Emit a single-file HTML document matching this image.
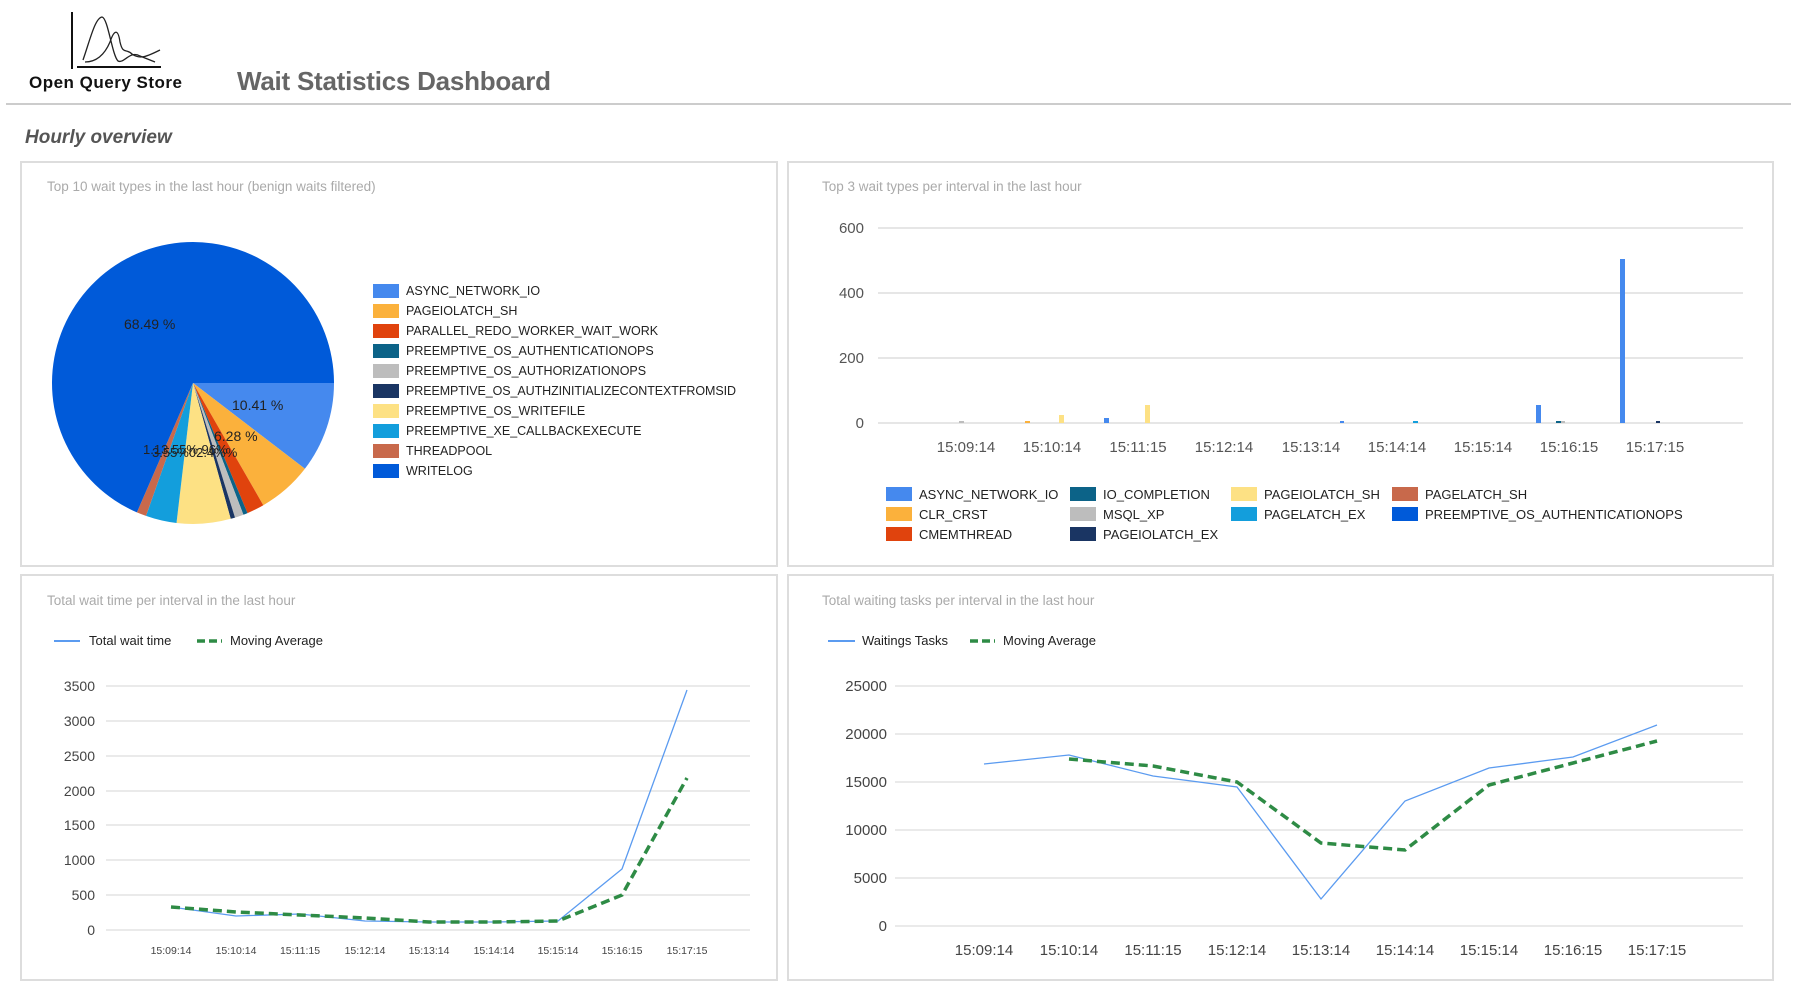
<!DOCTYPE html>
<html><head><meta charset="utf-8"><style>
html,body{margin:0;padding:0;background:#fff;width:1795px;height:1002px;overflow:hidden}
svg{display:block;font-family:"Liberation Sans",sans-serif}
</style></head><body>
<svg width="1795" height="1002" viewBox="0 0 1795 1002" xmlns="http://www.w3.org/2000/svg">
<line x1="72" y1="12" x2="72" y2="69" stroke="#111" stroke-width="2"/>
<line x1="77" y1="67" x2="161" y2="67" stroke="#111" stroke-width="2"/>
<path d="M83 60 C90 40 95 18 102 17 C108 18 112 55 118 61 C124 64 130 50 140 56 L155 62" fill="none" stroke="#222" stroke-width="1.3"/>
<path d="M85 62 C95 62 104 56 110 42 C114 30 118 28 120 42 C123 55 126 48 132 54 C140 60 148 56 160 50" fill="none" stroke="#222" stroke-width="1.3"/>
<text x="29" y="88" font-size="17" font-weight="bold" fill="#111" letter-spacing="0.5">Open Query Store</text>
<text x="237" y="90" font-size="26" font-weight="bold" fill="#666" textLength="314">Wait Statistics Dashboard</text>
<line x1="6" y1="104" x2="1791" y2="104" stroke="#bbb" stroke-width="1.5"/>
<text x="25" y="143" font-size="19" font-weight="bold" font-style="italic" fill="#555">Hourly overview</text>
<g fill="none" stroke="#ddd" stroke-width="2">
<rect x="21" y="162" width="756" height="404"/>
<rect x="788" y="162" width="985" height="404"/>
<rect x="21" y="575" width="756" height="405"/>
<rect x="788" y="575" width="985" height="405"/>
</g>
<g font-size="13.5" fill="#aaa">
<text x="47" y="191">Top 10 wait types in the last hour (benign waits filtered)</text>
<text x="822" y="191">Top 3 wait types per interval in the last hour</text>
<text x="47" y="605">Total wait time per interval in the last hour</text>
<text x="822" y="605">Total waiting tasks per interval in the last hour</text>
</g>
<path d="M193 383 L334 383 A141 141 0 0 1 304.9 468.8Z" fill="#4589ee"/>
<path d="M193 383 L304.9 468.8 A141 141 0 0 1 263.3 505.2Z" fill="#fbb13c"/>
<path d="M193 383 L263.3 505.2 A141 141 0 0 1 247.5 513.1Z" fill="#e0430d"/>
<path d="M193 383 L247.5 513.1 A141 141 0 0 1 243.4 514.7Z" fill="#0c6388"/>
<path d="M193 383 L243.4 514.7 A141 141 0 0 1 235 517.6Z" fill="#bdbdbd"/>
<path d="M193 383 L235 517.6 A141 141 0 0 1 230.7 518.8Z" fill="#1a3563"/>
<path d="M193 383 L230.7 518.8 A141 141 0 0 1 176.5 523Z" fill="#fde184"/>
<path d="M193 383 L176.5 523 A141 141 0 0 1 146 515.9Z" fill="#139edc"/>
<path d="M193 383 L146 515.9 A141 141 0 0 1 136.9 512.4Z" fill="#c8694b"/>
<path d="M193 383 L136.9 512.4 A141 141 0 1 1 334 383Z" fill="#005ad9"/>
<g font-size="14" fill="#222">
<text x="124" y="329">68.49 %</text>
<text x="232" y="410">10.41 %</text>
<text x="214" y="441">6.28 %</text>
<text x="143" y="454" font-size="13">1.13.55%.96%</text>
<text x="152" y="457" font-size="13">3.55%02.4%%</text>
</g>
<g font-size="12.5" fill="#222">
<rect x="373" y="284" width="26" height="14" fill="#4589ee"/><text x="406" y="295">ASYNC_NETWORK_IO</text>
<rect x="373" y="304" width="26" height="14" fill="#fbb13c"/><text x="406" y="315">PAGEIOLATCH_SH</text>
<rect x="373" y="324" width="26" height="14" fill="#e0430d"/><text x="406" y="335">PARALLEL_REDO_WORKER_WAIT_WORK</text>
<rect x="373" y="344" width="26" height="14" fill="#0c6388"/><text x="406" y="355">PREEMPTIVE_OS_AUTHENTICATIONOPS</text>
<rect x="373" y="364" width="26" height="14" fill="#bdbdbd"/><text x="406" y="375">PREEMPTIVE_OS_AUTHORIZATIONOPS</text>
<rect x="373" y="384" width="26" height="14" fill="#1a3563"/><text x="406" y="395" textLength="330">PREEMPTIVE_OS_AUTHZINITIALIZECONTEXTFROMSID</text>
<rect x="373" y="404" width="26" height="14" fill="#fde184"/><text x="406" y="415">PREEMPTIVE_OS_WRITEFILE</text>
<rect x="373" y="424" width="26" height="14" fill="#139edc"/><text x="406" y="435">PREEMPTIVE_XE_CALLBACKEXECUTE</text>
<rect x="373" y="444" width="26" height="14" fill="#c8694b"/><text x="406" y="455">THREADPOOL</text>
<rect x="373" y="464" width="26" height="14" fill="#005ad9"/><text x="406" y="475">WRITELOG</text>
</g>
<g stroke="#ddd" stroke-width="1.5">
<line x1="878" y1="228" x2="1743" y2="228"/><line x1="878" y1="293" x2="1743" y2="293"/>
<line x1="878" y1="358" x2="1743" y2="358"/><line x1="878" y1="423" x2="1743" y2="423"/>
</g>
<g font-size="15" fill="#555" text-anchor="end">
<text x="864" y="233">600</text><text x="864" y="298">400</text><text x="864" y="363">200</text><text x="864" y="428">0</text>
</g>
<g font-size="15" fill="#555" text-anchor="middle">
<text x="966" y="452">15:09:14</text><text x="1052" y="452">15:10:14</text><text x="1138" y="452">15:11:15</text>
<text x="1224" y="452">15:12:14</text><text x="1311" y="452">15:13:14</text><text x="1397" y="452">15:14:14</text>
<text x="1483" y="452">15:15:14</text><text x="1569" y="452">15:16:15</text><text x="1655" y="452">15:17:15</text>
</g>
<rect x="959" y="421" width="5" height="2" fill="#bdbdbd"/>
<rect x="1025" y="421" width="5" height="2" fill="#fbb13c"/>
<rect x="1059" y="415" width="5" height="8" fill="#fde184"/>
<rect x="1104" y="418" width="5" height="5" fill="#4589ee"/>
<rect x="1145" y="405" width="5" height="18" fill="#fde184"/>
<rect x="1340" y="421" width="4" height="2" fill="#4589ee"/>
<rect x="1413" y="421" width="5" height="2" fill="#139edc"/>
<rect x="1536" y="405" width="5" height="18" fill="#4589ee"/>
<rect x="1556" y="421" width="5" height="2" fill="#0c6388"/><rect x="1561" y="421" width="4" height="2" fill="#bdbdbd"/>
<rect x="1620" y="259" width="5" height="164" fill="#4589ee"/>
<rect x="1656" y="421" width="4" height="2" fill="#1a3563"/>
<g font-size="13" fill="#222">
<rect x="886" y="487" width="26" height="14" fill="#4589ee"/><text x="919" y="499">ASYNC_NETWORK_IO</text>
<rect x="886" y="507" width="26" height="14" fill="#fbb13c"/><text x="919" y="519">CLR_CRST</text>
<rect x="886" y="527" width="26" height="14" fill="#e0430d"/><text x="919" y="539">CMEMTHREAD</text>
<rect x="1070" y="487" width="26" height="14" fill="#0c6388"/><text x="1103" y="499">IO_COMPLETION</text>
<rect x="1070" y="507" width="26" height="14" fill="#bdbdbd"/><text x="1103" y="519">MSQL_XP</text>
<rect x="1070" y="527" width="26" height="14" fill="#1a3563"/><text x="1103" y="539">PAGEIOLATCH_EX</text>
<rect x="1231" y="487" width="26" height="14" fill="#fde184"/><text x="1264" y="499">PAGEIOLATCH_SH</text>
<rect x="1231" y="507" width="26" height="14" fill="#139edc"/><text x="1264" y="519">PAGELATCH_EX</text>
<rect x="1392" y="487" width="26" height="14" fill="#c8694b"/><text x="1425" y="499">PAGELATCH_SH</text>
<rect x="1392" y="507" width="26" height="14" fill="#005ad9"/><text x="1425" y="519">PREEMPTIVE_OS_AUTHENTICATIONOPS</text>
</g>
<g stroke="#ddd" stroke-width="1.2">
<line x1="106" y1="686" x2="750" y2="686"/><line x1="106" y1="721" x2="750" y2="721"/><line x1="106" y1="756" x2="750" y2="756"/>
<line x1="106" y1="791" x2="750" y2="791"/><line x1="106" y1="825" x2="750" y2="825"/><line x1="106" y1="860" x2="750" y2="860"/>
<line x1="106" y1="895" x2="750" y2="895"/><line x1="106" y1="930" x2="750" y2="930"/>
</g>
<g font-size="14" fill="#444" text-anchor="end">
<text x="95" y="691">3500</text><text x="95" y="726">3000</text><text x="95" y="761">2500</text><text x="95" y="796">2000</text>
<text x="95" y="830">1500</text><text x="95" y="865">1000</text><text x="95" y="900">500</text><text x="95" y="935">0</text>
</g>
<g font-size="10.5" fill="#444" text-anchor="middle">
<text x="171" y="954">15:09:14</text><text x="236" y="954">15:10:14</text><text x="300" y="954">15:11:15</text>
<text x="365" y="954">15:12:14</text><text x="429" y="954">15:13:14</text><text x="494" y="954">15:14:14</text>
<text x="558" y="954">15:15:14</text><text x="622" y="954">15:16:15</text><text x="687" y="954">15:17:15</text>
</g>
<polyline points="171,907 236,916 300,914 365,921 429,922 494,922 558,921 622,869 687,690" fill="none" stroke="#5b9bf0" stroke-width="1.3"/>
<polyline points="171,907 236,912 300,915 365,918 429,922 494,922 558,921 622,895 687,778" fill="none" stroke="#2e8b45" stroke-width="3.5" stroke-dasharray="9,5"/>
<line x1="54" y1="641" x2="80" y2="641" stroke="#5b9bf0" stroke-width="2"/>
<line x1="197" y1="641" x2="222" y2="641" stroke="#2e8b45" stroke-width="3.5" stroke-dasharray="8,4"/>
<g font-size="13" fill="#222"><text x="89" y="645">Total wait time</text><text x="230" y="645">Moving Average</text></g>
<g stroke="#ddd" stroke-width="1.2">
<line x1="895" y1="686" x2="1743" y2="686"/><line x1="895" y1="734" x2="1743" y2="734"/><line x1="895" y1="782" x2="1743" y2="782"/>
<line x1="895" y1="830" x2="1743" y2="830"/><line x1="895" y1="878" x2="1743" y2="878"/><line x1="895" y1="926" x2="1743" y2="926"/>
</g>
<g font-size="15" fill="#444" text-anchor="end">
<text x="887" y="691">25000</text><text x="887" y="739">20000</text><text x="887" y="787">15000</text>
<text x="887" y="835">10000</text><text x="887" y="883">5000</text><text x="887" y="931">0</text>
</g>
<g font-size="15" fill="#444" text-anchor="middle">
<text x="984" y="955">15:09:14</text><text x="1069" y="955">15:10:14</text><text x="1153" y="955">15:11:15</text>
<text x="1237" y="955">15:12:14</text><text x="1321" y="955">15:13:14</text><text x="1405" y="955">15:14:14</text>
<text x="1489" y="955">15:15:14</text><text x="1573" y="955">15:16:15</text><text x="1657" y="955">15:17:15</text>
</g>
<polyline points="984,764 1069,755 1153,776 1237,787 1321,899 1405,801 1489,768 1573,757 1657,725" fill="none" stroke="#5b9bf0" stroke-width="1.3"/>
<polyline points="1069,759 1153,766 1237,782 1321,843 1405,850 1489,785 1573,763 1657,741" fill="none" stroke="#2e8b45" stroke-width="3.5" stroke-dasharray="9,5"/>
<line x1="828" y1="641" x2="855" y2="641" stroke="#5b9bf0" stroke-width="2"/>
<line x1="970" y1="641" x2="995" y2="641" stroke="#2e8b45" stroke-width="3.5" stroke-dasharray="8,4"/>
<g font-size="13" fill="#222"><text x="862" y="645">Waitings Tasks</text><text x="1003" y="645">Moving Average</text></g>
</svg>
</body></html>
